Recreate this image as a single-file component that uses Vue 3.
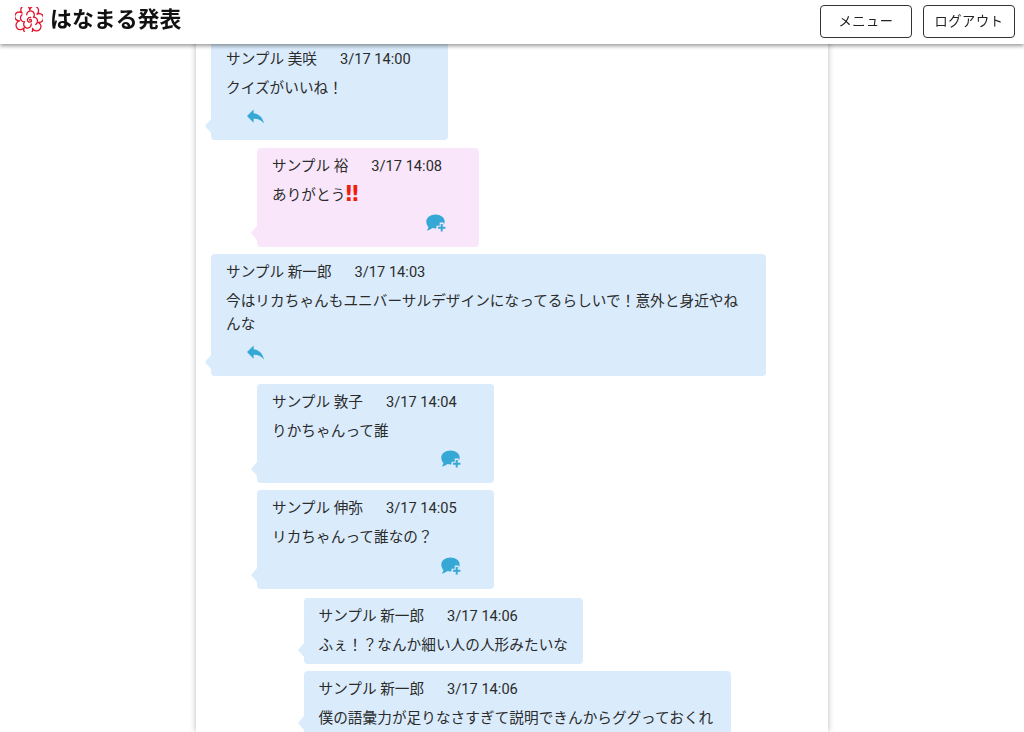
<script setup>
const messages = [
  { name: 'サンプル 美咲', time: '3/17 14:00', text: 'クイズがいいね！', depth: 0, action: 'reply' },
  { name: 'サンプル 裕', time: '3/17 14:08', text: 'ありがとう', bang: true, depth: 1, action: 'comment', pink: true },
  { name: 'サンプル 新一郎', time: '3/17 14:03', text: '今はリカちゃんもユニバーサルデザインになってるらしいで！意外と身近やねんな', depth: 0, action: 'reply' },
  { name: 'サンプル 敦子', time: '3/17 14:04', text: 'りかちゃんって誰', depth: 1, action: 'comment' },
  { name: 'サンプル 伸弥', time: '3/17 14:05', text: 'リカちゃんって誰なの？', depth: 1, action: 'comment' },
  { name: 'サンプル 新一郎', time: '3/17 14:06', text: 'ふぇ！？なんか細い人の人形みたいな', depth: 2, first: true },
  { name: 'サンプル 新一郎', time: '3/17 14:06', text: '僕の語彙力が足りなさすぎて説明できんからググっておくれ', depth: 2, wide: true }
]

function scallop(cx, cy, r, n, rot) {
  const lobe = (r * Math.sin(Math.PI / n) * 1.08).toFixed(2)
  let d = ''
  for (let k = 0; k <= n; k++) {
    const a = rot + (k * 2 * Math.PI) / n
    const x = (cx + r * Math.cos(a)).toFixed(2)
    const y = (cy + r * Math.sin(a)).toFixed(2)
    d += k === 0 ? `M${x} ${y}` : `A${lobe} ${lobe} 0 1 1 ${x} ${y}`
  }
  return d
}
const outer = scallop(14, 12.5, 9.5, 7, 0.3)
const inner = scallop(14, 12.5, 5, 4, 1.1)
</script>

<template>
  <div class="page">
    <header class="topbar">
      <div class="brand">
        <svg class="logo" viewBox="0 0 28 25" fill="none" stroke="#e3132a" stroke-width="1.3" stroke-linecap="round" stroke-linejoin="round">
          <path :d="outer"/>
          <path :d="inner" stroke-dasharray="24 5"/>
          <path d="M14.500 13c.8-1 2.300-.3 2 1-.4 1.600-3 1.600-3.800.1-.9-1.900.8-4 3-3.700"/>
        </svg>
        <span class="title">はなまる発表</span>
      </div>
      <nav class="nav">
        <button class="nav-btn" type="button">メニュー</button>
        <button class="nav-btn" type="button">ログアウト</button>
      </nav>
    </header>

    <main class="column">
      <div class="thread">
        <article
          v-for="(m, i) in messages"
          :key="i"
          class="bubble"
          :class="[`depth-${m.depth}`, { pink: m.pink, wide: m.wide, first: m.first }]"
        >
          <div class="meta">
            <span>{{ m.name }}</span>
            <span class="time">{{ m.time }}</span>
          </div>
          <p class="text">{{ m.text }}<span v-if="m.bang" class="bang">‼</span></p>
          <div v-if="m.action === 'reply'" class="actions">
            <svg class="reply" viewBox="3 5 18 15"><path d="M10 9V5l-7 7 7 7v-4.100c5 0 8.500 1.600 11 5.100-1-5-4-10-11-11z"/></svg>
          </div>
          <div v-else-if="m.action === 'comment'" class="actions end">
            <svg class="comment" viewBox="0 0 20 18">
              <mask :id="`cut-${i}`">
                <rect width="20" height="18" fill="#fff"/>
                <path d="M15.700 8.500v10.500M10.500 13.700h10.500" stroke="#000" stroke-width="4" fill="none"/>
              </mask>
              <path :mask="`url(#cut-${i})`" d="M9.500 .5c5 0 9.200 3 9.200 7 0 4-4.200 7-9.200 7-1 0-2-.1-2.900-.4C5.200 15.300 3 16.400 .700 16.500c1-1 1.600-2.200 1.700-3.500C1.200 11.700 .300 9.800 .300 7.500c0-4 4.200-7 9.200-7z"/>
              <path class="plus" d="M15.700 10v7.400M12 13.700h7.400"/>
            </svg>
          </div>
        </article>
      </div>
    </main>
  </div>
</template>

<style scoped>
.page {
  height: 732px;
  overflow: hidden;
  font-family: Roboto, "Noto Sans CJK JP", sans-serif;
  color: #2b2b2b;
}
.topbar {
  position: fixed;
  top: 0;
  left: 0;
  right: 0;
  z-index: 2;
  height: 44px;
  box-sizing: border-box;
  padding: 0 9px 2px 15px;
  display: flex;
  align-items: center;
  justify-content: space-between;
  background: #fff;
  box-shadow: 0 2px 4px rgba(0, 0, 0, 0.4);
}
.brand {
  display: flex;
  align-items: center;
  gap: 7px;
  padding-bottom: 3px;
}
.logo {
  width: 28px;
  height: 25px;
}
.title {
  font-size: 21.900px;
  line-height: 28px;
  font-weight: 700;
  color: #111;
}
.nav {
  display: flex;
  gap: 11px;
}
.nav-btn {
  width: 92px;
  height: 33px;
  padding: 0 0 2px;
  border: 1px solid #333;
  border-radius: 4px;
  background: #fff;
  font: 400 13.200px Roboto, "Noto Sans CJK JP", sans-serif;
  letter-spacing: 0.6px;
  color: #222;
}
.column {
  width: 632px;
  height: 732px;
  margin: 0 auto;
  background: #fff;
  box-shadow: 0 0 6px rgba(0, 0, 0, 0.28);
}
.thread {
  display: flex;
  flex-direction: column;
  align-items: flex-start;
  gap: 7.500px;
  padding: 41px 15px 0;
}
.bubble {
  position: relative;
  box-sizing: border-box;
  padding: 7px 15px;
  border-radius: 4px;
  background: #daebfc;
}
.bubble::before {
  content: "";
  position: absolute;
  left: -6px;
  bottom: 7px;
  border-style: solid;
  border-width: 7px 6px 7px 0;
  border-color: transparent #daebfc transparent transparent;
}
.bubble.pink {
  background: #f9e6fa;
}
.bubble.pink::before {
  border-right-color: #f9e6fa;
}
.depth-0 {
  max-width: 555px;
}
.depth-1 {
  margin-left: 46px;
  max-width: 508px;
}
.depth-2 {
  margin-left: 92.500px;
  max-width: 427px;
}
.first {
  margin-top: 1px;
}
.wide {
  width: 427px;
}
.meta {
  display: flex;
  gap: 23px;
  font-size: 14.630px;
  line-height: 22px;
}
.time {
  margin-right: 22px;
}
.text {
  margin: 7px 0 0;
  font-size: 14.630px;
  line-height: 23px;
  letter-spacing: 0.05px;
}
.bang {
  color: #f01d0f;
  font-family: "DejaVu Sans", sans-serif;
  font-weight: 700;
  font-size: 21px;
  line-height: 1;
  vertical-align: -1px;
}
.actions {
  display: flex;
  align-items: center;
  height: 33px;
  padding-left: 21px;
}
.actions.end {
  justify-content: flex-end;
  padding: 0 18px 0 0;
}
.reply {
  width: 17px;
  height: 15px;
  fill: #35a8d6;
}
.comment {
  width: 20px;
  height: 18px;
  fill: #35a8d6;
}
.plus {
  fill: none;
  stroke: #35a8d6;
  stroke-width: 2;
}
</style>

<style>
html,
body {
  margin: 0;
  background: #fff;
}
</style>
